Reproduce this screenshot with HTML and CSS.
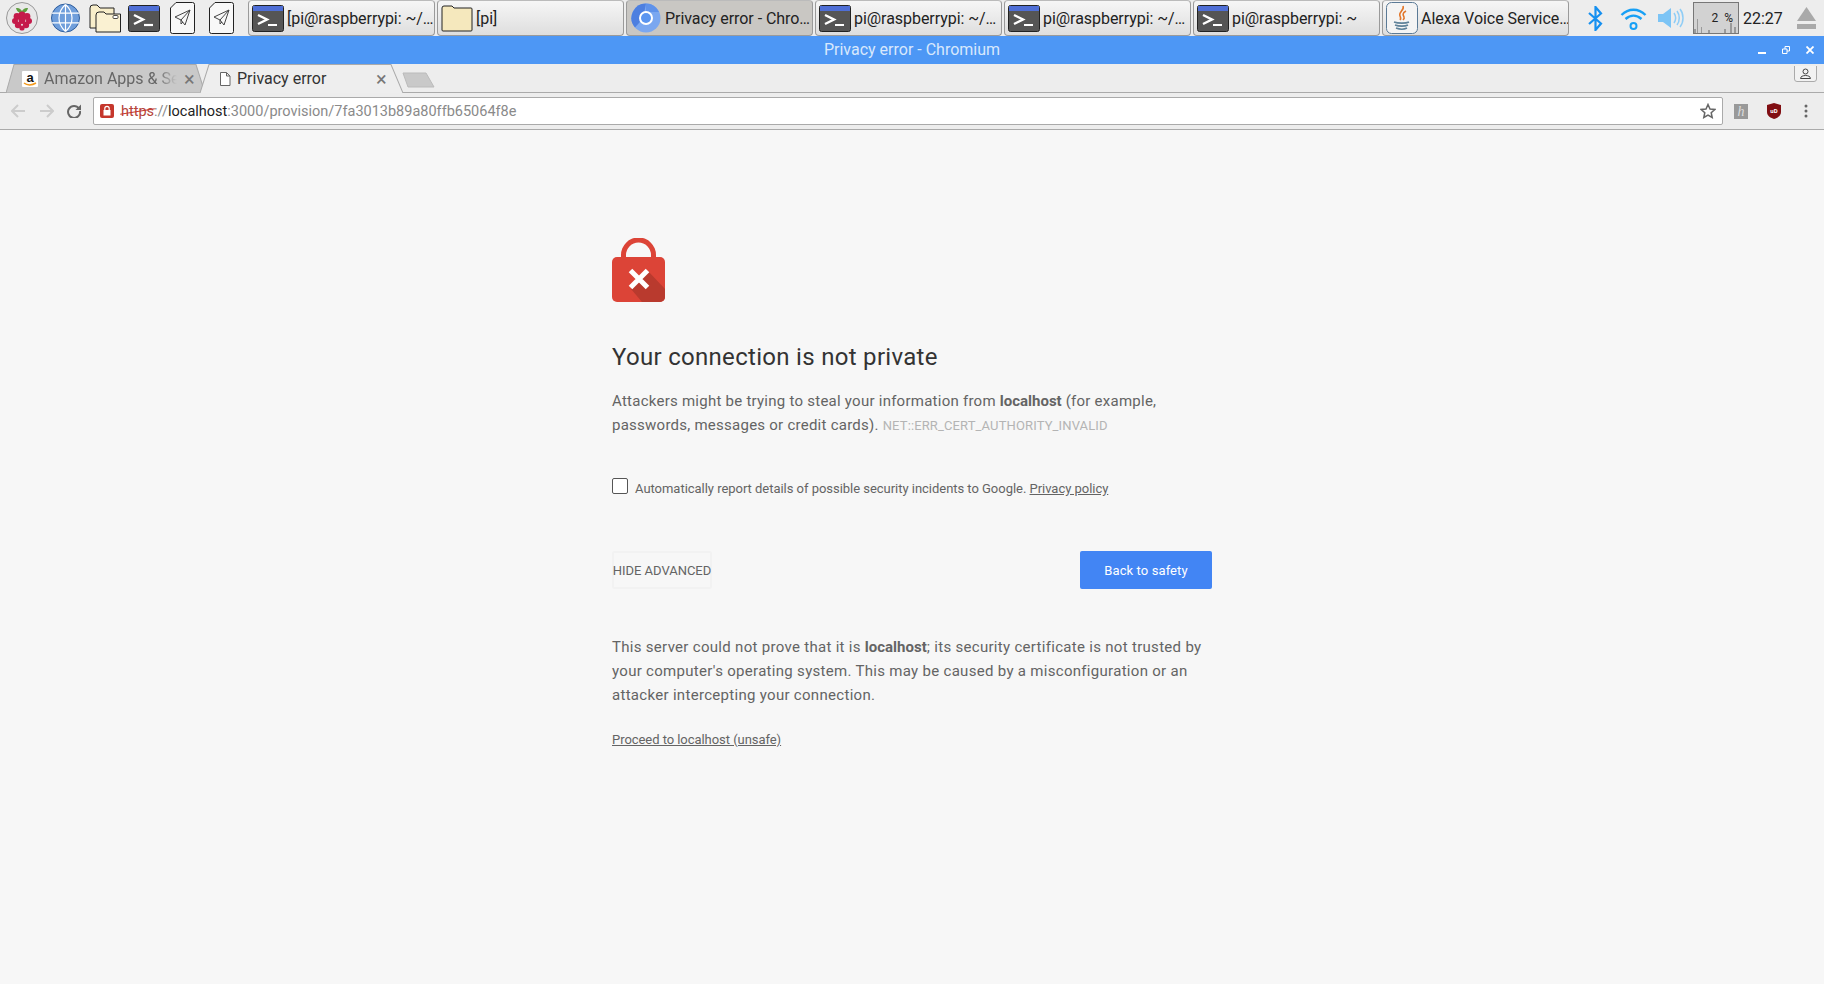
FILE: index.html
```html
<!DOCTYPE html>
<html>
  <head>
    <title>Privacy error</title>
    <link rel="stylesheet" href="styles.css">
  </head>
  <body>
    <svg class="defs" width="0" height="0">
      <symbol id="terminal" viewBox="0 0 32 27">
        <rect x="0.5" y="0.5" width="31" height="26" rx="2" fill="#555" stroke="#222"/>
        <rect x="1" y="1" width="30" height="5" fill="#4f6fd6"/>
        <path d="M6 10l9 4.5-9 4.500" fill="none" stroke="#fff" stroke-width="2.400"/>
        <path d="M16 20h9" stroke="#fff" stroke-width="2.200"/>
      </symbol>
      <symbol id="paper" viewBox="0 0 25 32">
        <path d="M6 .5h16.500a2 2 0 0 1 2 2v27a2 2 0 0 1-2 2h-20a2 2 0 0 1-2-2V6z" fill="#f8f8f8" stroke="#222"/>
        <path d="M5 15l15-7-5 15-4-5zM11 18l9-10M11 18v4l2-2" fill="none" stroke="#444" stroke-width="1"/>
      </symbol>
      <symbol id="folder" viewBox="0 0 32 29">
        <path d="M1 4a3 3 0 0 1 3-3h4l3 3h14v20H1z" fill="#f8eeca" stroke="#222"/>
        <path d="M7 11a3 3 0 0 1 3-3h5l2 2h14.500v18H7z" fill="#faf1d2" stroke="#222"/>
        <rect x="24" y="11.500" width="5" height="3" rx="1" fill="#fff" stroke="#222" stroke-width="0.800"/>
      </symbol>
    </svg>

    <div class="taskbar">
      <svg class="launcher raspberry" viewBox="0 0 32 32">
        <circle cx="16" cy="16" r="15.500" fill="#e8e8e8" stroke="#999"/>
        <path d="M10 6c3-.5 5 1 6 3 1-2 3-3.500 6-3-.5 3-3 5-6 5s-5.500-2-6-5z" fill="#5f9e3f"/>
        <g fill="#c51a4a">
          <circle cx="16" cy="13" r="3.400"/>
          <circle cx="11" cy="14.500" r="3.400"/>
          <circle cx="21" cy="14.500" r="3.400"/>
          <circle cx="9" cy="19" r="3"/>
          <circle cx="23" cy="19" r="3"/>
          <circle cx="16" cy="18.500" r="3.400"/>
          <circle cx="12" cy="23" r="3.200"/>
          <circle cx="20" cy="23" r="3.200"/>
          <circle cx="16" cy="26" r="2.600"/>
        </g>
      </svg>
      <svg class="launcher globe" viewBox="0 0 30 30">
        <circle cx="15" cy="15" r="14.500" fill="#6f9edb" stroke="#2d5b9a"/>
        <path d="M1 10h28M1 20h28M15 1v28M15 1c-9 8-9 20 0 28M15 1c9 8 9 20 0 28" fill="none" stroke="#fff" stroke-width="1.200"/>
      </svg>
      <svg class="launcher folders"><use href="#folder"/></svg>
      <svg class="launcher term"><use href="#terminal"/></svg>
      <svg class="launcher send"><use href="#paper"/></svg>
      <svg class="launcher send last"><use href="#paper"/></svg>

      <div class="tasks">
        <div class="task"><svg class="task-icon"><use href="#terminal"/></svg><span class="task-label">[pi@raspberrypi: ~/…</span></div>
        <div class="task"><svg class="task-icon" viewBox="0 0 32 27"><path d="M1 3a2 2 0 0 1 2-2h8l2 2h17a1 1 0 0 1 1 1v21a1 1 0 0 1-1 1H2a1 1 0 0 1-1-1z" fill="#f5e8bd" stroke="#222"/></svg><span class="task-label">[pi]</span></div>
        <div class="task active">
          <svg class="task-icon chromium" viewBox="0 0 30 30">
            <circle cx="15" cy="15" r="14.500" fill="#7aa7f0"/>
            <path d="M15 .5A14.500 14.500 0 0 0 4 24.500l8-9z" fill="#4d7fe0"/>
            <path d="M15 .5A14.500 14.500 0 0 1 28 9H15z" fill="#5f92ea"/>
            <circle cx="15" cy="15" r="7" fill="#fff"/>
            <circle cx="15" cy="15" r="5" fill="#5b95f0"/>
          </svg>
          <span class="task-label">Privacy error - Chro…</span>
        </div>
        <div class="task"><svg class="task-icon"><use href="#terminal"/></svg><span class="task-label">pi@raspberrypi: ~/…</span></div>
        <div class="task"><svg class="task-icon"><use href="#terminal"/></svg><span class="task-label">pi@raspberrypi: ~/…</span></div>
        <div class="task"><svg class="task-icon"><use href="#terminal"/></svg><span class="task-label">pi@raspberrypi: ~</span></div>
        <div class="task">
          <svg class="task-icon java" viewBox="0 0 32 32">
            <rect x="0.500" y="0.500" width="31" height="31" rx="5" fill="#f4f4f4" stroke="#5b7a96"/>
            <path d="M17 4c2 4-5 6-3 10 1 2 1 3 0 4M20 9c-4 2-3 4-2 6 .5 1 0 2-1 3" fill="none" stroke="#e2762a" stroke-width="1.600"/>
            <path d="M8 20c4 1.500 12 1.500 15 0M9 23c4 1.500 10 1.500 13 0M10 26c4 1.500 8 1.500 11 0" fill="none" stroke="#5f8299" stroke-width="1.600"/>
          </svg>
          <span class="task-label">Alexa Voice Service…</span>
        </div>
      </div>

      <div class="tray">
        <svg class="tray-bluetooth" viewBox="0 0 15 25"><path d="M1 7l12 10.500L7.500 24V1L13 7.500 1 18" fill="none" stroke="#1690f0" stroke-width="2.200"/></svg>
        <svg class="tray-wifi" viewBox="0 0 27 23">
          <path d="M1.500 8c7-7 17-7 24 0M5.500 12c5-4.500 11-4.500 16 0" fill="none" stroke="#18a0f5" stroke-width="2.400"/>
          <circle cx="13.500" cy="19" r="3" fill="none" stroke="#18a0f5" stroke-width="2"/>
        </svg>
        <svg class="tray-volume" viewBox="0 0 26 20">
          <path d="M0 6h5l8-6v20l-8-6H0z" fill="#7cc4f5"/>
          <path d="M16 5c2 3 2 7 0 10M19 3c3 4 3 10 0 14M22 1c4 5 4 13 0 18" fill="none" stroke="#8fcdf6" stroke-width="1.500"/>
        </svg>
        <div class="cpu">
          <svg class="cpu-graph" viewBox="0 0 44 30" preserveAspectRatio="none"><path d="M0 30V26h2v4h1V16h1v14h3v-6h1v6h6v-3h2v3h14v-4h2v4h4V20h2v10h2V24h2v6z" fill="#9a9a9a"/></svg>
          <span class="cpu-text">2 %</span>
        </div>
        <span class="clock">22:27</span>
        <svg class="tray-eject" viewBox="0 0 19 22"><path d="M9.500 0L19 14H0z" fill="#a9a9a9"/><rect y="17" width="19" height="5" fill="#a9a9a9"/></svg>
      </div>
    </div>

    <div class="titlebar">
      <span class="title-text">Privacy error - Chromium</span>
      <div class="window-controls">
        <svg viewBox="0 0 8 8"><path d="M0 7h8" stroke="#fff" stroke-width="2"/></svg>
        <svg viewBox="0 0 8 8"><path d="M.5 3h4.500v4.500H.5zM3 3V.5h4.500V5H5" fill="none" stroke="#fff"/></svg>
        <svg viewBox="0 0 8 8"><path d="M.5.5l7 7M7.500.5l-7 7" stroke="#fff" stroke-width="1.800"/></svg>
      </div>
    </div>

    <div class="tabstrip">
      <div class="tab">
        <svg class="tab-bg" viewBox="0 0 199 28" preserveAspectRatio="none"><path d="M0 28L8 .5h182l9 27.500z" fill="#c9c9c9" stroke="#aaa"/></svg>
        <svg class="favicon" viewBox="0 0 16 16">
          <rect width="16" height="16" rx="1" fill="#fff"/>
          <text x="8" y="10.500" class="amazon-a">a</text>
          <path d="M2 12c3 2.500 8 2.500 12 0" fill="none" stroke="#f39a1d" stroke-width="1.500"/>
        </svg>
        <span class="tab-label">Amazon Apps &amp; Se</span>
        <span class="tab-close">×</span>
      </div>
      <div class="tab current">
        <svg class="tab-bg" viewBox="0 0 203 28" preserveAspectRatio="none"><path d="M0 28L9 .5h182l12 27.500" fill="#eee" stroke="#aaa"/></svg>
        <svg class="favicon" viewBox="0 0 16 16"><path d="M3.500 1.500h6l3.500 3.500v9.500h-9.500zM9.500 1.500V5H13" fill="#fff" stroke="#666"/></svg>
        <span class="tab-label">Privacy error</span>
        <span class="tab-close">×</span>
      </div>
      <svg class="new-tab" viewBox="0 0 34 16"><path d="M1 1h23l8 14H6z" fill="#c9c9c9" stroke="#bbb"/></svg>
      <svg class="profile" viewBox="0 0 23 16">
        <path d="M.5 0v13a2.500 2.500 0 0 0 2.500 2.500h17a2.500 2.500 0 0 0 2.500-2.500V0" fill="#f2f2f2" stroke="#aaa"/>
        <circle cx="11.500" cy="5.500" r="2.500" fill="none" stroke="#444"/>
        <path d="M6.500 12.500c0-4 10-4 10 0z" fill="none" stroke="#444"/>
      </svg>
    </div>

    <div class="toolbar">
      <svg class="nav back" viewBox="0 0 14 14"><path d="M7 1L1 7l6 6M1 7h13" fill="none" stroke="#ccc" stroke-width="2"/></svg>
      <svg class="nav forward" viewBox="0 0 14 14"><path d="M7 1l6 6-6 6M13 7H0" fill="none" stroke="#ccc" stroke-width="2"/></svg>
      <svg class="nav reload" viewBox="0 0 14 14"><path d="M12 4.500A6 6 0 1 0 13 7" fill="none" stroke="#666" stroke-width="2"/><path d="M8.500 6H14V.5z" fill="#666"/></svg>
      <div class="omnibox">
        <svg class="secure-badge" viewBox="0 0 14 14">
          <rect width="14" height="14" rx="2" fill="#c5372c"/>
          <path d="M4.800 6V4.500a2.200 2.200 0 0 1 4.400 0V6" fill="none" stroke="#fff" stroke-width="1.200"/>
          <rect x="3.500" y="6" width="7" height="5.500" fill="#fff"/>
        </svg>
        <span class="url"><span class="scheme">https</span><span class="url-dim">://</span><span class="url-host">localhost</span><span class="url-dim">:3000/provision/7fa3013b89a80ffb65064f8e</span></span>
        <svg class="star" viewBox="0 0 16 16"><path d="M8 1.500l2 4.500 4.800.5-3.600 3.200 1 4.800L8 12.100 3.800 14.500l1-4.800L1.200 6.500 6 6z" fill="none" stroke="#666" stroke-width="1.500"/></svg>
      </div>
      <div class="extensions">
        <div class="ext-h">h</div>
        <svg class="ext-shield" viewBox="0 0 14 16">
          <path d="M7 0l7 2v7c0 4-4 6-7 7-3-1-7-3-7-7V2z" fill="#800e12"/>
          <text x="7" y="10" class="shield-text">uD</text>
        </svg>
        <svg class="ext-menu" viewBox="0 0 4 14"><circle cx="2" cy="2" r="1.500" fill="#666"/><circle cx="2" cy="7" r="1.500" fill="#666"/><circle cx="2" cy="12" r="1.500" fill="#666"/></svg>
      </div>
    </div>

    <div class="interstitial">
      <svg class="lock" viewBox="0 0 53 64">
        <path d="M9 20V17a17.500 17.500 0 0 1 35 0v3h-5V17a12.500 12.500 0 0 0-25 0v3z" fill="#dc4437"/>
        <rect y="19" width="53" height="45" rx="5" fill="#dc4437"/>
        <path d="M36 33L53 51v8a5 5 0 0 1-5 5H30L19 51z" fill="#b93a2e"/>
        <path d="M18.500 32.500l17 17M35.500 32.500l-17 17" stroke="#fff" stroke-width="5"/>
      </svg>
      <h1>Your connection is not private</h1>
      <p class="message">Attackers might be trying to steal your information from <strong>localhost</strong> (for example, passwords, messages or credit cards). <span class="error-code">NET::ERR_CERT_AUTHORITY_INVALID</span></p>
      <div class="report">
        <span class="checkbox"></span>
        <span class="report-text">Automatically report details of possible security incidents to Google. <a href="#">Privacy policy</a></span>
      </div>
      <div class="actions">
        <button class="btn-advanced">HIDE ADVANCED</button>
        <button class="btn-safety">Back to safety</button>
      </div>
      <p class="details">This server could not prove that it is <strong>localhost</strong>; its security certificate is not trusted by your computer's operating system. This may be caused by a misconfiguration or an attacker intercepting your connection.</p>
      <a class="proceed" href="#">Proceed to localhost (unsafe)</a>
    </div>
  </body>
</html>
```

FILE: styles.css
```css
* {
  box-sizing: border-box;
  margin: 0;
  padding: 0;
}
html,
body {
  height: 100%;
}
body {
  font-family: "Roboto", "Liberation Sans", sans-serif;
  background-color: #f7f7f7;
  overflow: hidden;
}
svg {
  display: block;
  flex: none;
}
.defs {
  position: absolute;
}

/* panel */
.taskbar {
  display: flex;
  align-items: center;
  height: 36px;
  padding-left: 6px;
  background-color: #ededed;
}
.launcher {
  margin-right: 9px;
}
.raspberry {
  width: 32px;
  height: 32px;
  margin-right: 13px;
}
.globe {
  width: 29px;
  height: 30px;
}
.folders {
  width: 32px;
  height: 29px;
  margin-right: 7px;
}
.term {
  width: 32px;
  height: 27px;
  margin-right: 10px;
}
.send {
  width: 25px;
  height: 32px;
  margin-right: 14px;
}
.tasks {
  display: flex;
  gap: 2px;
}
.task {
  display: flex;
  align-items: center;
  gap: 3px;
  width: 187px;
  height: 36px;
  padding-left: 3px;
  border: 1px solid #9a9a9a;
  border-top-color: #bbb;
  border-radius: 4px;
  background: linear-gradient(#f6f6f6, #dedede);
  color: #222;
  font-size: 16px;
  letter-spacing: -0.05px;
  white-space: nowrap;
  overflow: hidden;
}
.task.active {
  background: #c9c7c3;
}
.task-icon {
  width: 32px;
  height: 27px;
}
.chromium {
  width: 30px;
  height: 30px;
  margin-left: 1px;
  margin-right: 1px;
}
.java {
  width: 32px;
  height: 32px;
}
.tray {
  display: flex;
  align-items: center;
  margin-left: 19px;
}
.tray-bluetooth {
  width: 15px;
  height: 25px;
  margin-right: 17px;
}
.tray-wifi {
  width: 27px;
  height: 23px;
  margin-right: 11px;
}
.tray-volume {
  width: 26px;
  height: 20px;
  margin-right: 9px;
}
.cpu {
  position: relative;
  width: 46px;
  height: 32px;
  margin-right: 4px;
  border: 1px solid #777;
  background-color: #d2d2d2;
}
.cpu-graph {
  position: absolute;
  inset: 0;
  width: 100%;
  height: 100%;
}
.cpu-text {
  position: absolute;
  right: 5px;
  top: 8px;
  font-size: 12px;
  word-spacing: 3px;
  color: #222;
}
.clock {
  width: 54px;
  font-size: 16px;
  color: #222;
}
.tray-eject {
  width: 19px;
  height: 22px;
}

/* window */
.titlebar {
  position: relative;
  height: 28px;
  background-color: #4d97f5;
  color: #d8e8fc;
  font-size: 16px;
  line-height: 28px;
  text-align: center;
}
.window-controls {
  position: absolute;
  right: 10px;
  top: 10px;
  display: flex;
  gap: 16px;
}
.window-controls svg {
  width: 8px;
  height: 8px;
}
.tabstrip {
  position: relative;
  display: flex;
  align-items: flex-end;
  height: 29px;
  padding-left: 6px;
  background-color: #ededed;
  border-bottom: 1px solid #aaa;
}
.tab {
  position: relative;
  display: flex;
  align-items: center;
  width: 199px;
  height: 29px;
  margin-bottom: -1px;
  padding-left: 16px;
  color: #666;
  font-size: 16px;
  flex: none;
}
.tab.current {
  width: 203px;
  margin-left: -5px;
  padding-left: 17px;
  color: #333;
}
.tab-bg {
  position: absolute;
  left: 0;
  top: 0;
  width: 100%;
  height: 100%;
}
.favicon {
  position: relative;
  width: 16px;
  height: 16px;
  margin-right: 6px;
}
.current .favicon {
  margin-right: 4px;
}
.amazon-a {
  font-family: "Liberation Sans", sans-serif;
  font-size: 13px;
  font-weight: 700;
  text-anchor: middle;
  fill: #111;
}
.tab-label {
  position: relative;
  width: 133px;
  white-space: nowrap;
  overflow: hidden;
  -webkit-mask-image: linear-gradient(to right, #000 85%, transparent);
}
.current .tab-label {
  width: 132px;
  -webkit-mask-image: none;
}
.tab-close {
  position: relative;
  margin-left: 7px;
  font-size: 20px;
  color: #777;
}
.new-tab {
  width: 34px;
  height: 16px;
  margin: 0 0 4px -1px;
}
.profile {
  position: absolute;
  right: 7px;
  top: 2px;
  width: 23px;
  height: 16px;
}
.toolbar {
  display: flex;
  align-items: center;
  height: 37px;
  padding: 0 16px 0 11px;
  background-color: #ededed;
  border-bottom: 1px solid #aaa;
}
.nav {
  width: 14px;
  height: 14px;
}
.forward {
  margin-left: 15px;
}
.reload {
  margin: 0 12px 0 13px;
}
.omnibox {
  display: flex;
  align-items: center;
  flex: 1;
  height: 28px;
  padding: 0 6px 0 6px;
  background-color: #fff;
  border: 1px solid #aaa;
  border-radius: 2px;
}
.secure-badge {
  width: 14px;
  height: 14px;
  margin-right: 7px;
}
.url {
  flex: 1;
  font-size: 14.500px;
  white-space: nowrap;
}
.scheme {
  position: relative;
  color: #b5443a;
}
.scheme::after {
  content: "";
  position: absolute;
  left: -1px;
  right: -1px;
  top: 50%;
  height: 1px;
  background-color: #c5372c;
  transform: rotate(-9deg);
}
.url-dim {
  color: #8a8a8a;
}
.url-host {
  color: #222;
}
.star {
  width: 16px;
  height: 16px;
}
.extensions {
  display: flex;
  align-items: center;
  margin-left: 11px;
}
.ext-h {
  width: 14px;
  height: 15px;
  background-color: #999;
  color: #ddd;
  font-family: "Liberation Serif", serif;
  font-size: 14px;
  font-style: italic;
  line-height: 15px;
  text-align: center;
}
.ext-shield {
  width: 14px;
  height: 16px;
  margin-left: 19px;
}
.shield-text {
  font-size: 6px;
  font-weight: 700;
  text-anchor: middle;
  fill: #fff;
}
.ext-menu {
  width: 4px;
  height: 14px;
  margin-left: 23px;
}

/* error page */
.interstitial {
  width: 600px;
  margin: 0 auto;
  padding-top: 108px;
  color: #646464;
  font-size: 15px;
  line-height: 24px;
}
.lock {
  width: 53px;
  height: 64px;
}
h1 {
  margin-top: 40px;
  color: #333;
  font-size: 24px;
  font-weight: 400;
  line-height: 30px;
  letter-spacing: 0.3px;
}
.message {
  margin-top: 17px;
  letter-spacing: 0.25px;
}
.details {
  margin-top: 46px;
  letter-spacing: 0.3px;
}
.message strong,
.details strong {
  letter-spacing: 0;
}
.error-code {
  color: #b4b4b4;
  font-size: 13px;
  letter-spacing: 0.13px;
}
.report {
  display: flex;
  align-items: flex-start;
  margin-top: 40px;
  line-height: 20px;
}
.checkbox {
  width: 16px;
  height: 16px;
  margin-right: 7px;
  border: 1px solid #555;
  border-radius: 2px;
  background-color: #fff;
}
.report-text {
  margin-top: 1px;
  font-size: 13px;
  letter-spacing: -0.03px;
}
.report-text a,
.proceed {
  color: #646464;
}
.actions {
  display: flex;
  justify-content: space-between;
  margin-top: 52px;
}
.actions button {
  height: 38px;
  font-family: inherit;
  font-size: 13px;
  border-radius: 2px;
  white-space: nowrap;
  padding: 0;
  border: none;
}
.btn-advanced {
  width: 100px;
  background: none;
  box-shadow: inset 0 0 0 2px #f2f2f2;
  color: #646464;
  letter-spacing: -0.03px;
}
.btn-safety {
  width: 132px;
  background-color: #4285f4;
  color: #fff;
  letter-spacing: 0.1px;
}
.proceed {
  display: block;
  margin-top: 21px;
  font-size: 13px;
  letter-spacing: -0.05px;
}
```
